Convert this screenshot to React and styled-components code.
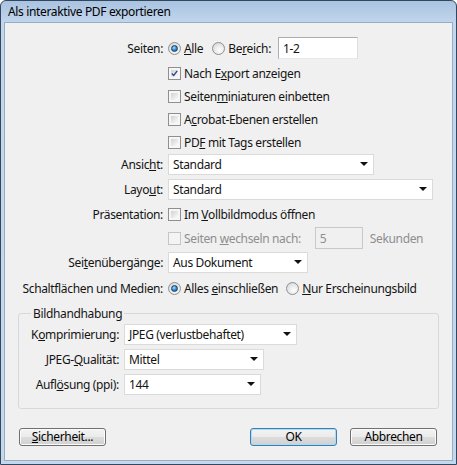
import React from 'react';
import styled, { createGlobalStyle } from 'styled-components';

const GlobalStyle = createGlobalStyle`
    html, body {
        margin: 0;
        padding: 0;
        background: #ffffff;
    }
    body {
        font-family: "Noto Sans", "Open Sans", sans-serif;
        font-size: 12px;
        letter-spacing: -0.35px;
        color: #141414;
    }
`;

const Window = styled.div`
    width: 457px;
    height: 465px;
    box-sizing: border-box;
    border: 1px solid #33485e;
    border-radius: 6px 6px 0 0;
    background: linear-gradient(to bottom, #a9c3e1 0, #c2d6ec 22px, #c4d8ed 100%);
    display: flex;
    flex-direction: column;
    overflow: hidden;
`;

const TitleBar = styled.div`
    height: 21px;
    flex: none;
    padding-left: 7px;
    display: flex;
    align-items: center;
    color: #000000;
`;

const Client = styled.div`
    flex: 1;
    margin: 0 3px 3px;
    background: #f0f0f0;
    border: 1px solid #97adc6;
    display: flex;
    flex-direction: column;
    padding-top: 14px;
`;

const Row = styled.div`
    display: grid;
    grid-template-columns: ${p => p.$label}px 1fr;
    column-gap: 5px;
    align-items: center;
    height: 22px;
    margin-top: ${p => p.$mt || 0}px;
`;

const Label = styled.div`
    text-align: right;
    white-space: nowrap;
`;

const Controls = styled.div`
    display: flex;
    align-items: center;
    white-space: nowrap;
`;

const U = styled.span`
    text-decoration: underline;
`;

const Option = styled.label`
    display: flex;
    align-items: center;
    gap: 3px;
    margin-left: ${p => p.$ml || 0}px;
    color: ${p => (p.$disabled ? '#8e8e8e' : 'inherit')};
`;

const Box = styled.span`
    width: 13px;
    height: 13px;
    box-sizing: border-box;
    flex: none;
    border: 1px solid ${p => (p.$disabled ? '#c6c6c6' : '#8e8f8f')};
    padding: 2px;
    background: ${p => (p.$disabled
        ? '#f4f4f4'
        : 'linear-gradient(135deg, #d2d2d2, #fbfbfb) content-box, #f6f6f6')};
    display: flex;
    align-items: center;
    justify-content: center;
`;

const Radio = styled.span`
    width: 13px;
    height: 13px;
    box-sizing: border-box;
    flex: none;
    border-radius: 50%;
    border: 1px solid #8e8f8f;
    background: radial-gradient(circle at 60% 65%, #ffffff 0, #e6e6e6 55%, #cfcfcf 100%);
    display: flex;
    align-items: center;
    justify-content: center;
`;

const Dot = styled.span`
    width: 7px;
    height: 7px;
    border-radius: 50%;
    box-sizing: border-box;
    border: 1px solid #1d3f63;
    background: radial-gradient(circle at 40% 35%, #b8e2ff 0, #3d8fd1 45%, #124c82 100%);
`;

const TextBox = styled.div`
    width: ${p => p.$w}px;
    height: 22px;
    box-sizing: border-box;
    margin-left: ${p => p.$ml || 0}px;
    border: 1px solid ${p => (p.$disabled ? '#c9c9c9' : '#abadb3')};
    border-right-color: ${p => (p.$disabled ? '#c9c9c9' : '#dbdfe6')};
    border-bottom-color: ${p => (p.$disabled ? '#c9c9c9' : '#e3e9ef')};
    background: ${p => (p.$disabled ? '#f0f0f0' : '#ffffff')};
    color: ${p => (p.$disabled ? '#8e8e8e' : 'inherit')};
    padding-left: 4px;
    display: flex;
    align-items: center;
`;

const Select = styled.div`
    width: ${p => p.$w}px;
    height: 21px;
    box-sizing: border-box;
    border: 1px solid #dadada;
    background: #ffffff;
    padding: 0 5px 0 4px;
    display: flex;
    align-items: center;

    &::after {
        content: '';
        margin-left: auto;
        border-top: 4px solid #111111;
        border-left: 4px solid transparent;
        border-right: 4px solid transparent;
    }
`;

const Group = styled.fieldset`
    margin: 6px 13px 0 13px;
    padding: 0 0 13px 0;
    border: 1px solid #d5d9dd;
    border-radius: 3px;
    min-width: 0;
`;

const Legend = styled.legend`
    margin-left: 12px;
    padding: 0 2px;
    line-height: 17px;
`;

const Footer = styled.div`
    display: flex;
    align-items: center;
    margin-top: 19px;
    padding: 0 15px 0 14px;
    gap: 13px;
`;

const Button = styled.button`
    width: 87px;
    height: 18px;
    box-sizing: border-box;
    padding: 0;
    font: inherit;
    letter-spacing: inherit;
    color: #000000;
    border-radius: 3px;
    border: 1px solid ${p => (p.$default ? '#3c7eb0' : '#707070')};
    background: linear-gradient(to bottom, #f3f3f3 0, #ebebeb 50%, #dddddd 50%, #d0d0d0 100%);
    box-shadow: inset 0 0 0 1px ${p => (p.$default ? '#a9ddf5' : '#fbfbfb')};
    margin-right: ${p => (p.$push ? 'auto' : '0')};
    line-height: 14px;
`;

function Check({ checked, disabled }) {
    return (
        <Box $disabled={disabled}>
            {checked ? (
                <svg width="9" height="9" viewBox="0 0 9 9">
                    <path d="M1 4.5 L3.5 7 L8 1.2" fill="none" stroke="#2f4b8a" strokeWidth="1.8" />
                </svg>
            ) : null}
        </Box>
    );
}

function RadioBtn({ checked }) {
    return <Radio>{checked ? <Dot /> : null}</Radio>;
}

export default function App() {
    return (
        <>
            <GlobalStyle />
            <Window>
                <TitleBar>Als interaktive PDF exportieren</TitleBar>
                <Client>
                    <Row $label={158}>
                        <Label>Seiten:</Label>
                        <Controls>
                            <Option><RadioBtn checked /><span><U>A</U>lle</span></Option>
                            <Option $ml={9}><RadioBtn /><span>Be<U>r</U>eich:</span></Option>
                            <TextBox $w={80} $ml={7}>1-2</TextBox>
                        </Controls>
                    </Row>
                    <Row $label={158} $mt={3}>
                        <span />
                        <Controls>
                            <Option><Check checked /><span>Nach E<U>x</U>port anzeigen</span></Option>
                        </Controls>
                    </Row>
                    <Row $label={158} $mt={1}>
                        <span />
                        <Controls>
                            <Option><Check /><span>Seiten<U>m</U>iniaturen einbetten</span></Option>
                        </Controls>
                    </Row>
                    <Row $label={158} $mt={1}>
                        <span />
                        <Controls>
                            <Option><Check /><span>A<U>c</U>robat-Ebenen erstellen</span></Option>
                        </Controls>
                    </Row>
                    <Row $label={158} $mt={1}>
                        <span />
                        <Controls>
                            <Option><Check /><span>PD<U>F</U> mit Tags erstellen</span></Option>
                        </Controls>
                    </Row>
                    <Row $label={158} $mt={0}>
                        <Label>Ansic<U>h</U>t:</Label>
                        <Controls><Select $w={206}>Standard</Select></Controls>
                    </Row>
                    <Row $label={158} $mt={3}>
                        <Label>Layo<U>u</U>t:</Label>
                        <Controls><Select $w={265}>Standard</Select></Controls>
                    </Row>
                    <Row $label={158} $mt={3}>
                        <Label>Präsentation:</Label>
                        <Controls>
                            <Option><Check /><span>Im <U>V</U>ollbildmodus öffnen</span></Option>
                        </Controls>
                    </Row>
                    <Row $label={158} $mt={2}>
                        <span />
                        <Controls>
                            <Option $disabled><Check disabled /><span>Seiten <U>w</U>echseln nach:</span></Option>
                            <TextBox $w={48} $ml={14} $disabled>5</TextBox>
                            <Option $ml={7} $disabled>Sekunden</Option>
                        </Controls>
                    </Row>
                    <Row $label={158} $mt={2}>
                        <Label>Sei<U>t</U>enübergänge:</Label>
                        <Controls><Select $w={140}>Aus Dokument</Select></Controls>
                    </Row>
                    <Row $label={158} $mt={4}>
                        <Label>Schaltflächen und Medien:</Label>
                        <Controls>
                            <Option><RadioBtn checked /><span>Alles <U>e</U>inschließen</span></Option>
                            <Option $ml={8}><RadioBtn /><span><U>N</U>ur Erscheinungsbild</span></Option>
                        </Controls>
                    </Row>

                    <Group>
                        <Legend>Bildhandhabung</Legend>
                        <Row $label={100} $mt={1}>
                            <Label>K<U>o</U>mprimierung:</Label>
                            <Controls><Select $w={173}>JPEG (verlustbehaftet)</Select></Controls>
                        </Row>
                        <Row $label={100} $mt={3}>
                            <Label>JPEG-<U>Q</U>ualität:</Label>
                            <Controls><Select $w={140}>Mittel</Select></Controls>
                        </Row>
                        <Row $label={100} $mt={3}>
                            <Label>Aufl<U>ö</U>sung (ppi):</Label>
                            <Controls><Select $w={137}>144</Select></Controls>
                        </Row>
                    </Group>

                    <Footer>
                        <Button $push><U>S</U>icherheit...</Button>
                        <Button $default>OK</Button>
                        <Button>Abbrechen</Button>
                    </Footer>
                </Client>
            </Window>
        </>
    );
}
